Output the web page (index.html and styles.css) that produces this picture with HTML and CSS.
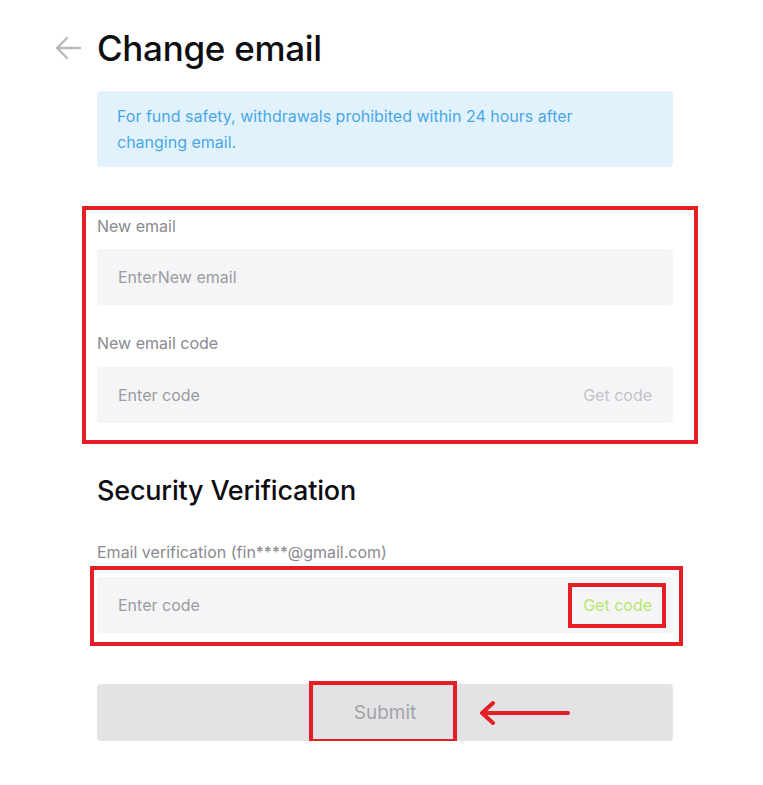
FILE: index.html
```html
<!DOCTYPE html>
<html>
<head>
<meta charset="utf-8">
<link rel="stylesheet" href="styles.css">
</head>
<body>
<div class="page">
  <div class="header">
    <svg class="back" width="28" height="24" viewBox="0 0 28 24"><path d="M26 12H3M13 2L3 12l10 10" fill="none" stroke="#b9b9bd" stroke-width="2.4" stroke-linecap="round" stroke-linejoin="round"/></svg>
    <h1 class="title">Change email</h1>
  </div>
  <div class="content">
    <div class="notice">For fund safety, withdrawals prohibited within 24 hours after changing email.</div>

    <div class="group group-new">
      <div class="label">New email</div>
      <div class="input"><span class="ph">EnterNew email</span></div>
      <div class="label label-2">New email code</div>
      <div class="input"><span class="ph">Enter code</span><span class="getcode">Get code</span></div>
      <div class="mark mark-new"></div>
    </div>

    <h2 class="section">Security Verification</h2>
    <div class="label label-sec">Email verification (fin****@gmail.com)</div>
    <div class="group">
      <div class="input"><span class="ph">Enter code</span><span class="getcode active">Get code</span></div>
      <div class="mark mark-sec"></div>
      <div class="mark mark-get"></div>
    </div>

    <div class="group group-submit">
      <div class="submit">Submit</div>
      <div class="mark mark-submit"></div>
      <svg class="arrow" width="96" height="28" viewBox="0 0 96 28"><path d="M91 14H6M16 4L5 14l11 10" fill="none" stroke="#e31e24" stroke-width="4" stroke-linecap="round" stroke-linejoin="round"/></svg>
    </div>
  </div>
</div>
</body>
</html>
```

FILE: styles.css
```css
* { box-sizing: border-box; }
body {
  margin: 0;
  background: #ffffff;
  font-family: Inter, "Noto Sans", "Liberation Sans", sans-serif;
  color: #111;
}
.page { padding-top: 26px; }
.header {
  display: flex;
  align-items: center;
  height: 44px;
}
.back { margin-left: 54px; margin-right: 15px; }
.title {
  margin: 0;
  font-size: 35px;
  font-weight: 500;
  letter-spacing: -0.3px;
  color: #0d0d12;
}
.content {
  margin-left: 97px;
  width: 576px;
  padding-top: 21px;
}
.notice {
  background: #e1f2fd;
  border-radius: 4px;
  height: 76px;
  padding: 12px 80px 0 20px;
  color: #4aa7e6;
  font-size: 16px;
  line-height: 26px;
}
.group { position: relative; }
.group-new { margin-top: 48px; }
.label {
  font-size: 16px;
  line-height: 22px;
  color: #8a8a8f;
  margin-bottom: 12px;
}
.label-2 { margin-top: 27px; margin-bottom: 13px; }
.input {
  height: 56px;
  background: #f5f5f7;
  border-radius: 4px;
  display: flex;
  align-items: center;
  justify-content: space-between;
  padding: 0 21px;
  font-size: 16px;
}
.ph { color: #9b9ba0; }
.getcode { color: #c2c2c6; }
.getcode.active { color: #b5e86c; }
.section {
  margin: 50px 0 0 0;
  font-size: 27px;
  line-height: 36px;
  font-weight: 500;
  color: #0d0d12;
  letter-spacing: -0.2px;
}
.label-sec { margin-top: 32px; margin-bottom: 14px; }
.group-submit { margin-top: 51px; }
.submit {
  height: 57px;
  background: #e3e3e6;
  border-radius: 4px;
  display: flex;
  align-items: center;
  justify-content: center;
  color: #a3a3a8;
  font-size: 19px;
}
.mark {
  position: absolute;
  border: 4px solid #e31e24;
}
.mark-new { left: -15px; top: -9px; width: 616px; height: 238px; }
.mark-sec { left: -7px; top: -11px; width: 593px; height: 80px; }
.mark-get { left: 471px; top: 6px; width: 98px; height: 45px; }
.mark-submit { left: 212px; top: -3px; width: 148px; height: 62px; }
.arrow { position: absolute; left: 380px; top: 15px; }
```
